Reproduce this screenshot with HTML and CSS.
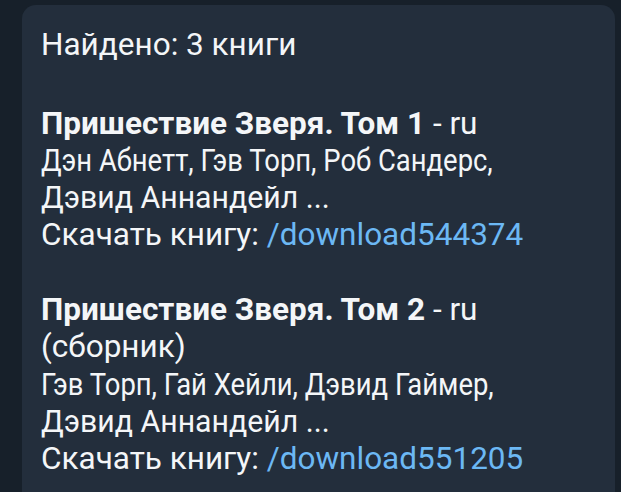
FILE: index.html
```html
<!DOCTYPE html>
<html lang="ru">
<head>
<meta charset="utf-8">
<link rel="stylesheet" href="styles.css">
</head>
<body>
<div class="chat">
  <div class="bubble">
    <p class="line">Найдено: 3 книги</p>
    <p class="line gap">&nbsp;</p>
    <p class="line"><b>Пришествие Зверя. Том 1</b> - ru</p>
    <p class="line"><span class="fit">Дэн Абнетт, Гэв Торп, Роб Сандерс,</span></p>
    <p class="line"><span class="fit-soft">Дэвид Аннандейл ...</span></p>
    <p class="line">Скачать книгу: <span class="link">/download544374</span></p>
    <p class="line">&nbsp;</p>
    <p class="line"><b>Пришествие Зверя. Том 2</b> - ru</p>
    <p class="line">(сборник)</p>
    <p class="line"><span class="fit">Гэв Торп, Гай Хейли, Дэвид Гаймер,</span></p>
    <p class="line"><span class="fit-soft">Дэвид Аннандейл ...</span></p>
    <p class="line">Скачать книгу: <span class="link">/download551205</span></p>
  </div>
</div>
</body>
</html>
```
FILE: styles.css
```css
html, body {
  margin: 0;
  padding: 0;
  background: #17202a;
  height: 100%;
  overflow: hidden;
}
.chat {
  display: flex;
  flex-direction: column;
  padding: 5px 0 0 22px;
  background: #17202a;
  height: 100%;
  box-sizing: border-box;
}
.bubble {
  flex: 1;
  margin-right: 6px;
  background: #232e3c;
  border-radius: 14px 14px 0 0;
  padding: 21px 20px 0 19px;
  font-family: Roboto, "Noto Sans", sans-serif;
  font-size: 31.5px;
  line-height: 37.3px;
  color: #f4f6f8;
}
.line {
  margin: 0;
  white-space: nowrap;
}
.gap {
  height: 41.3px;
}
.line b {
  font-weight: 700;
}
.fit {
  display: inline-block;
  transform: scaleX(0.87);
  transform-origin: left center;
}
.fit-soft {
  display: inline-block;
  transform: scaleX(0.96);
  transform-origin: left center;
}
.link {
  color: #6cb8f4;
}
```
